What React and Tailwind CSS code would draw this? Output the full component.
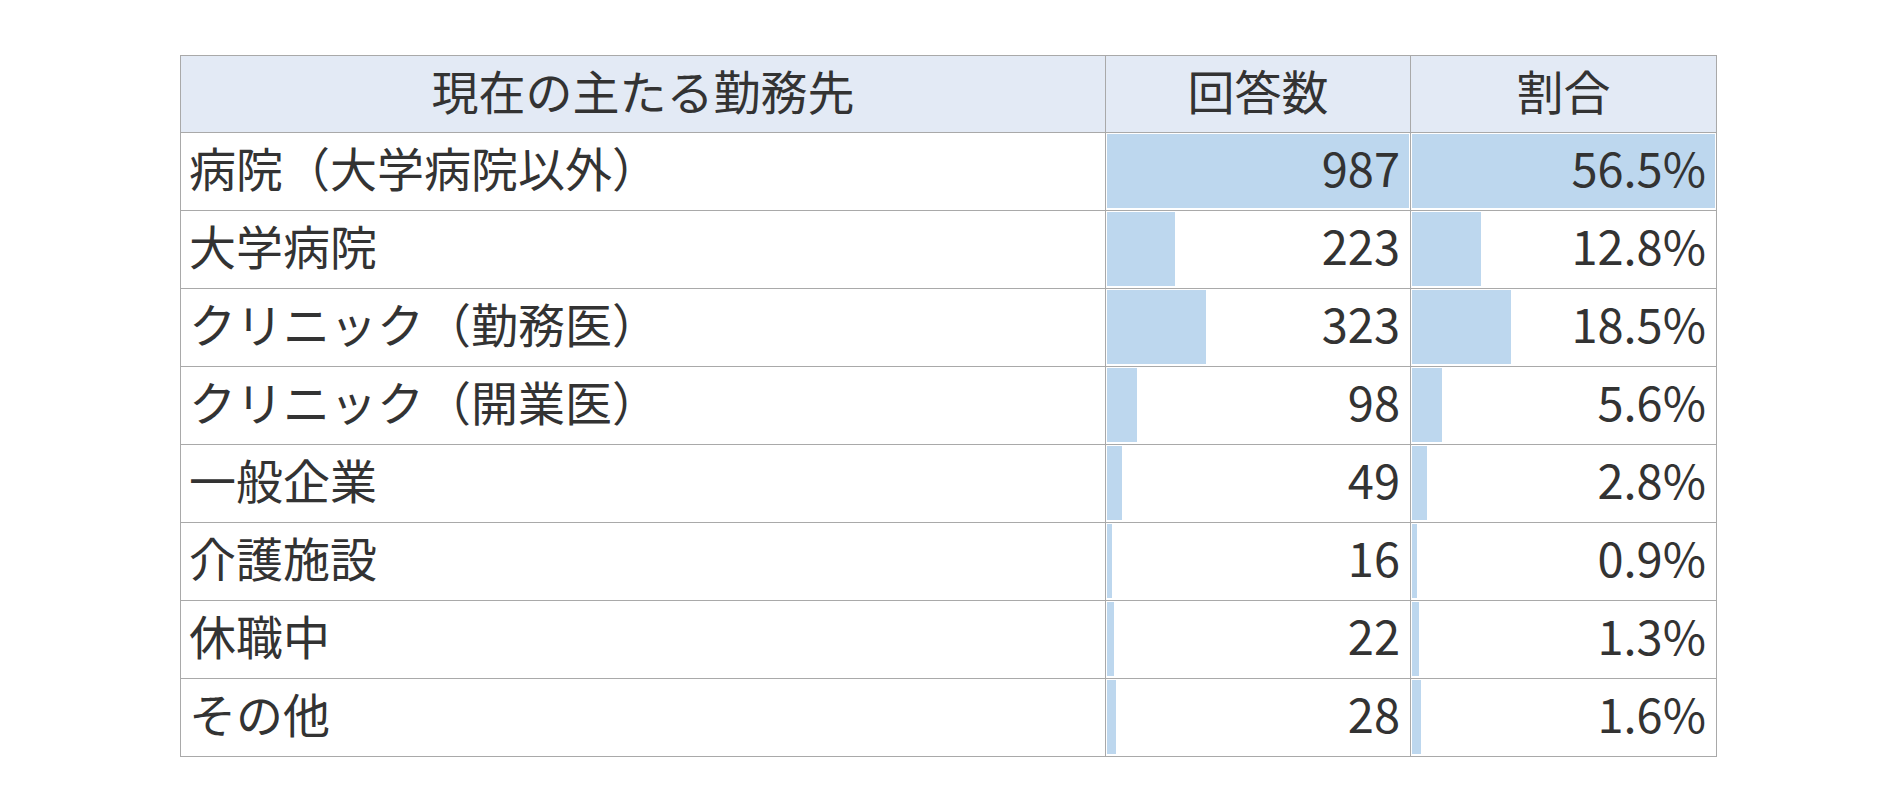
import React from 'react';

// 現在の主たる勤務先（回答数・割合）
const rows = [
  { label: '病院（大学病院以外）', count: 987, rate: 56.5 },
  { label: '大学病院', count: 223, rate: 12.8 },
  { label: 'クリニック（勤務医）', count: 323, rate: 18.5 },
  { label: 'クリニック（開業医）', count: 98, rate: 5.6 },
  { label: '一般企業', count: 49, rate: 2.8 },
  { label: '介護施設', count: 16, rate: 0.9 },
  { label: '休職中', count: 22, rate: 1.3 },
  { label: 'その他', count: 28, rate: 1.6 },
];

const maxCount = Math.max(...rows.map((r) => r.count));
const maxRate = Math.max(...rows.map((r) => r.rate));

const BarCell = ({ ratio, children }) => (
  <td className="border border-[#a9a9a9] p-0 h-[77px]">
    <div className="relative h-[77px]">
      <div
        className="absolute left-[1px] top-[1px] bottom-[2px] bg-[#bdd7ee]"
        style={{ width: `calc((100% - 2px) * ${ratio})` }}
      />
      <div className="relative flex h-full items-center justify-end pr-[10px] pb-[10px]">
        {children}
      </div>
    </div>
  </td>
);

const App = () => {
  return (
    <div
      className="min-h-screen bg-white pt-[55px] pl-[180px] text-[#333333]"
      style={{ fontFamily: '"Noto Sans CJK JP", "Noto Sans", sans-serif' }}
    >
      <table className="border-collapse table-fixed w-[1536px] text-[47px] leading-none">
        <colgroup>
          <col className="w-[925px]" />
          <col className="w-[305px]" />
          <col className="w-[306px]" />
        </colgroup>
        <thead>
          <tr className="bg-[#e3eaf5]">
            <th className="border border-[#a9a9a9] h-[77px] font-normal text-center pb-[10px]">現在の主たる勤務先</th>
            <th className="border border-[#a9a9a9] h-[77px] font-normal text-center pb-[10px]">回答数</th>
            <th className="border border-[#a9a9a9] h-[77px] font-normal text-center pb-[10px]">割合</th>
          </tr>
        </thead>
        <tbody>
          {rows.map((row) => (
            <tr key={row.label}>
              <td className="border border-[#a9a9a9] h-[77px] pl-[8px] pb-[10px] whitespace-nowrap">{row.label}</td>
              <BarCell ratio={row.count / maxCount}>{row.count}</BarCell>
              <BarCell ratio={row.rate / maxRate}>{row.rate.toFixed(1)}%</BarCell>
            </tr>
          ))}
        </tbody>
      </table>
    </div>
  );
};

export default App;
